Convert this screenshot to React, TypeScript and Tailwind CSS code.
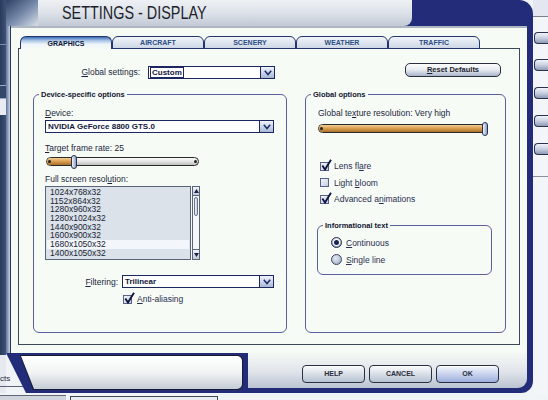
import React from 'react'

const RESOLUTIONS = [
  '1024x768x32',
  '1152x864x32',
  '1280x960x32',
  '1280x1024x32',
  '1440x900x32',
  '1600x900x32',
  '1680x1050x32',
  '1400x1050x32',
]

const TABS = ['GRAPHICS', 'AIRCRAFT', 'SCENERY', 'WEATHER', 'TRAFFIC']

function U({ children }: { children: React.ReactNode }) {
  return <span className="underline underline-offset-[1px]">{children}</span>
}

function Chevron() {
  return (
    <svg width="8" height="6" viewBox="0 0 8 6">
      <path d="M0.8 0.8 L4 4.6 L7.2 0.8" fill="none" stroke="#1c2a6a" strokeWidth="1.5" />
    </svg>
  )
}

function Select({ value, className, focus }: { value: string; className: string; focus?: boolean }) {
  return (
    <div className={`flex h-[13px] border border-[#1c2760] bg-white ${className}`}>
      <div className="flex flex-1 items-center pl-[1px]">
        <span
          className={`px-[1px] text-[8px] font-bold leading-[9px] text-[#10163a] ${focus ? 'border border-[#1c2760]' : ''}`}
        >
          {value}
        </span>
      </div>
      <div className="flex w-[14px] items-center justify-center border-l border-[#1c2760] bg-gradient-to-b from-[#f0f4fa] to-[#a8b9d6]">
        <Chevron />
      </div>
    </div>
  )
}

function Slider({ className, fill, thumb }: { className: string; fill: string; thumb: string }) {
  return (
    <div className={`relative h-[9px] rounded-full border border-[#2a2a2a] bg-gradient-to-b from-[#fbfbfb] via-[#e4e4e4] to-[#bdbdbd] ${className}`}>
      <div className={`absolute bottom-0 left-0 top-0 rounded-l-full bg-gradient-to-b from-[#f2cf94] via-[#d89c4c] to-[#a8712c] ${fill}`} />
      <div className="absolute left-[1px] top-[2px] h-[3px] w-[3px] rounded-full bg-[#222]" />
      <div className="absolute right-[1px] top-[2px] h-[3px] w-[3px] rounded-full bg-[#222]" />
      <div className={`absolute -top-[3px] h-[14px] w-[6px] rounded-full border border-[#27304c] bg-gradient-to-r from-[#f2f5fb] to-[#8d9fc2] ${thumb}`} />
    </div>
  )
}

function Check({ checked }: { checked?: boolean }) {
  return (
    <span className="relative inline-block h-[9px] w-[9px] shrink-0 border border-[#5a6088] bg-gradient-to-br from-[#f4f6fa] to-[#c6cee0]">
      {checked && (
        <svg className="absolute -top-[4px] left-[0px]" width="11" height="12" viewBox="0 0 11 12">
          <path d="M1.3 6.5 L4 10.5 L10 0.8" fill="none" stroke="#0f1840" strokeWidth="1.9" />
        </svg>
      )}
    </span>
  )
}

function Radio({ on }: { on?: boolean }) {
  return on ? (
    <span className="flex h-[11px] w-[11px] shrink-0 items-center justify-center rounded-full border border-[#232a4a] bg-gradient-to-b from-[#d4dbe8] to-[#8d99b6]">
      <span className="flex h-[7px] w-[7px] items-center justify-center rounded-full bg-white">
        <span className="h-[5px] w-[5px] rounded-full bg-[#1a2450]" />
      </span>
    </span>
  ) : (
    <span className="h-[11px] w-[11px] shrink-0 rounded-full border border-[#3a4262] bg-[radial-gradient(circle_at_40%_35%,#e6ebf4,#98a4c0)]" />
  )
}

function Group({ title, className, children }: { title: string; className: string; children: React.ReactNode }) {
  return (
    <div className={`relative rounded-[6px] border border-[#5b5f9c] ${className}`}>
      <span className="absolute -top-[5px] left-[5px] bg-[#f6fbf6] px-[2px] text-[7.5px] font-bold leading-[10px] text-[#10142e]">
        {title}
      </span>
      {children}
    </div>
  )
}

function Btn({ label, primary }: { label: string; primary?: boolean }) {
  return (
    <div
      className={`flex h-[18px] w-[63px] items-center justify-center rounded-[4px] border border-[#2a3042] text-[7px] font-bold text-[#2a2c3c] shadow-[inset_0_1px_0_#fff] ${
        primary ? 'bg-gradient-to-b from-[#f6f8fe] to-[#9eafdc]' : 'bg-gradient-to-b from-[#fbfcfc] to-[#b7c2d2]'
      }`}
    >
      {label}
    </div>
  )
}

function Desktop() {
  return (
    <div className="flex w-[6px] flex-col">
      <div className="flex h-[355px] flex-col bg-gradient-to-r from-[#293a5a] to-[#3e5378]">
        <div className="mt-[44px] h-px bg-[#7d8db0]" />
        <div className="mt-[40px] h-[14px] border-y border-[#9aa8c0] bg-[#34466a]" />
        <div className="h-[16px] bg-[#e8ecf2]" />
      </div>
      <div className="flex-1 bg-[#e6eaf0] pt-[19px]">
        <div className="w-[30px] border-b border-[#5a6274] pb-[2px] text-[8px] leading-[10px] text-[#20243a]">
          cts
        </div>
      </div>
    </div>
  )
}

function RightStrip() {
  return (
    <div className="flex w-[15px] flex-col bg-[#f3f5f9]">
      <div className="h-[17px] border-b border-[#7a8090] bg-[#e4e6f2]" />
      {[15, 15, 16, 16, 16].map((m, i) => (
        <div
          key={i}
          style={{ marginTop: m }}
          className="ml-[1px] h-[12px] rounded-l-[4px] border border-r-0 border-[#2a3450] bg-gradient-to-b from-[#f2f4f9] via-[#c8d0e0] to-[#8e9ab6]"
        />
      ))}
      <div className="mt-[21px] h-px bg-[#8a90a0]" />
    </div>
  )
}

function Panel() {
  return (
    <div className="mx-[7px] h-[297px] border border-[#3b4858]">
      <div className="mt-[14px] flex h-[15px] items-start">
        <span className="mt-[4px] w-[121px] text-right text-[8.5px] leading-[10px]">
          <U>G</U>lobal settings:
        </span>
        <Select value="Custom" focus className="ml-[8px] mt-[3px] w-[127px]" />
        <div className="ml-[130px] flex h-[14px] w-[96px] items-center justify-center rounded-[5px] border border-[#2a3042] bg-gradient-to-b from-[#fdfdfd] via-[#e6eaf0] to-[#a9b4ca] text-[7.5px] font-bold text-[#1c1e2c]">
          <U>R</U>eset Defaults
        </div>
      </div>

      <div className="mt-[16px] flex pl-[14px]">
        <Group title="Device-specific options" className="h-[239px] w-[254px]">
          <div className="flex flex-col pl-[11px] pt-[13px] text-[8.5px] leading-[10px]">
            <span>
              <U>D</U>evice:
            </span>
            <Select value="NVIDIA GeForce 8800 GTS.0" className="mt-[2px] w-[229px]" />
            <span className="mt-[10px]">
              <U>T</U>arget frame rate: 25
            </span>
            <Slider className="ml-[1px] mt-[4px] w-[153px]" fill="w-[27px]" thumb="left-[24px]" />
            <span className="mt-[8px]">
              Full screen resol<U>u</U>tion:
            </span>
            <div className="mt-[2px] flex h-[74px] w-[155px]">
              <div className="h-full w-[146px] border border-[#5a6478] bg-[#dbe2ea] px-[1px] pt-[1px]">
                {RESOLUTIONS.map((r) => (
                  <div
                    key={r}
                    className={`h-[8.7px] pl-[3px] text-[8.5px] leading-[8.7px] text-[#1a1e34] ${
                      r === '1680x1050x32' ? 'bg-[#f3f6fa]' : ''
                    }`}
                  >
                    {r}
                  </div>
                ))}
              </div>
              <div className="ml-[1px] flex h-full w-[8px] flex-col border border-[#5a6478] bg-[#f5f7f9]">
                <div className="flex h-[9px] items-center justify-center border-b border-[#5a6478] bg-gradient-to-b from-[#f4f6fa] to-[#c0c8d8]">
                  <svg width="5" height="4" viewBox="0 0 5 4">
                    <path d="M0 4 L2.5 0 L5 4 Z" fill="#1c2448" />
                  </svg>
                </div>
                <div className="mx-[1px] mt-[1px] h-[19px] rounded-[2px] border border-[#6a7488] bg-gradient-to-r from-[#f4f6f8] to-[#c4ccd8]" />
                <div className="flex-1" />
                <div className="flex h-[10px] items-center justify-center border-t border-[#5a6478] bg-gradient-to-b from-[#f4f6fa] to-[#c0c8d8]">
                  <svg width="5" height="4" viewBox="0 0 5 4">
                    <path d="M0 0 L2.5 4 L5 0 Z" fill="#1c2448" />
                  </svg>
                </div>
              </div>
            </div>
            <div className="mt-[15px] flex items-center">
              <span className="w-[73px] text-right">
                <U>F</U>iltering:
              </span>
              <Select value="Trilinear" className="ml-[4px] w-[152px]" />
            </div>
            <div className="ml-[78px] mt-[6px] flex items-center gap-[5px] text-[#2a2e50]">
              <Check checked />
              <span>
                <U>A</U>nti-aliasing
              </span>
            </div>
          </div>
        </Group>

        <Group title="Global options" className="ml-[18px] h-[239px] w-[201px]">
          <div className="flex flex-col pl-[12px] pt-[13px] text-[8.5px] leading-[10px]">
            <span>
              Global te<U>x</U>ture resolution: Very high
            </span>
            <Slider className="mt-[6px] w-[170px]" fill="w-full rounded-r-full" thumb="right-[-1px]" />
            <div className="ml-[2px] mt-[28px] flex flex-col gap-[6.5px] text-[#2a2e50]">
              <div className="flex h-[10px] items-center gap-[5px]">
                <Check checked />
                <span>
                  Lens fl<U>a</U>re
                </span>
              </div>
              <div className="flex h-[10px] items-center gap-[5px]">
                <Check />
                <span>
                  Light <U>b</U>loom
                </span>
              </div>
              <div className="flex h-[10px] items-center gap-[5px]">
                <Check checked />
                <span>
                  Advanced a<U>n</U>imations
                </span>
              </div>
            </div>
            <Group title="Informational text" className="-ml-[1px] mt-[21px] h-[50px] w-[175px]">
              <div className="flex flex-col gap-[6px] pl-[13px] pt-[11px] text-[#2a2e50]">
                <div className="flex items-center gap-[4px]">
                  <Radio on />
                  <span>
                    <U>C</U>ontinuous
                  </span>
                </div>
                <div className="flex items-center gap-[4px]">
                  <Radio />
                  <span>
                    <U>S</U>ingle line
                  </span>
                </div>
              </div>
            </Group>
          </div>
        </Group>
      </div>
    </div>
  )
}

function Window() {
  return (
    <div className="flex w-[527px] flex-col">
      <div className="flex h-[26px] rounded-tr-[14px] bg-[#222c78]">
        <div className="w-[32px] bg-gradient-to-br from-[#2f4266] via-[#7487a8] to-[#d9dfe8]" />
        <div className="flex w-[374px] items-center rounded-br-[8px] bg-gradient-to-b from-[#eef1f4] via-[#dde2e9] to-[#c2c9d5] pl-[24px]">
          <span className="inline-block origin-left scale-x-[0.8] whitespace-nowrap text-[18px] leading-[20px] text-[#1c1e2a]">
            SETTINGS - DISPLAY
          </span>
        </div>
      </div>

      <div className="flex h-[327px] bg-[#222c78] pr-[6px]">
        <div className="w-[5px] border-r border-[#2b3450] bg-gradient-to-r from-[#5e729a] to-[#c9d3e2]" />
        <div className="flex-1 border-t-2 border-[#aeb6c2] bg-[#f6fbf6]">
          <div className="relative z-10 -mb-px ml-[9px] mt-[8px] flex h-[13px]">
            {TABS.map((t, i) =>
              i === 0 ? (
                <div
                  key={t}
                  className="flex h-[13px] w-[92px] items-center justify-center rounded-t-[6px] border border-b-0 border-[#23356a] bg-[linear-gradient(to_bottom,#3d6db8_0%,#a9c4e6_30%,#eef4fa_60%,#f6fbf6_100%)] pt-[1px] text-[7px] font-bold leading-none text-[#0d1836]"
                >
                  {t}
                </div>
              ) : (
                <div
                  key={t}
                  className="flex h-[13px] w-[92px] items-center justify-center rounded-t-[6px] border border-[#23356a] bg-gradient-to-b from-[#f2f5f9] to-[#cdd7e5] text-[7px] font-bold leading-none text-[#2b4d84]"
                >
                  {t}
                </div>
              ),
            )}
          </div>
          <Panel />
        </div>
      </div>

      <div className="flex h-[40px]">
        <div className="w-[242px] bg-[#222c78] pt-[2px] [clip-path:polygon(0_0,100%_0,100%_100%,20px_100%)]">
          <div className="ml-[14px] h-[35px] w-[223px] rounded-r-[6px] bg-[#161c34] p-[1px] [clip-path:polygon(0_0,100%_0,100%_100%,13px_100%)]">
            <div className="h-full rounded-r-[5px] bg-gradient-to-b from-white via-[#f2f4f4] to-[#c6ccd6] [clip-path:polygon(0_0,100%_0,100%_100%,13px_100%)]" />
          </div>
        </div>
        <div className="flex-1 rounded-br-[12px] bg-[#222c78] pb-[5px] pr-[6px]">
          <div className="flex h-full items-start justify-end gap-[4px] rounded-br-[9px] bg-gradient-to-b from-[#f4f8f4] via-[#e2e6ec] to-[#bcc4d2] pr-[28px] pt-[12px]">
            <Btn label="HELP" />
            <Btn label="CANCEL" />
            <Btn label="OK" primary />
          </div>
        </div>
      </div>
    </div>
  )
}

export default function App() {
  return (
    <div className="flex h-[400px] w-[548px] flex-col overflow-hidden bg-[#f1f4f6] font-['Liberation_Sans',Arial,sans-serif] text-[#1b1f3b]">
      <div className="flex h-[393px]">
        <Desktop />
        <Window />
        <RightStrip />
      </div>
      <div className="flex h-[7px] items-end">
        <div className="h-[5px] w-[66px] border-t border-[#606878] bg-[#d0d4dc]" />
        <div className="ml-[4px] h-[4px] w-[148px] border-x border-t border-[#404858] bg-[#e8ecf0]" />
      </div>
    </div>
  )
}
